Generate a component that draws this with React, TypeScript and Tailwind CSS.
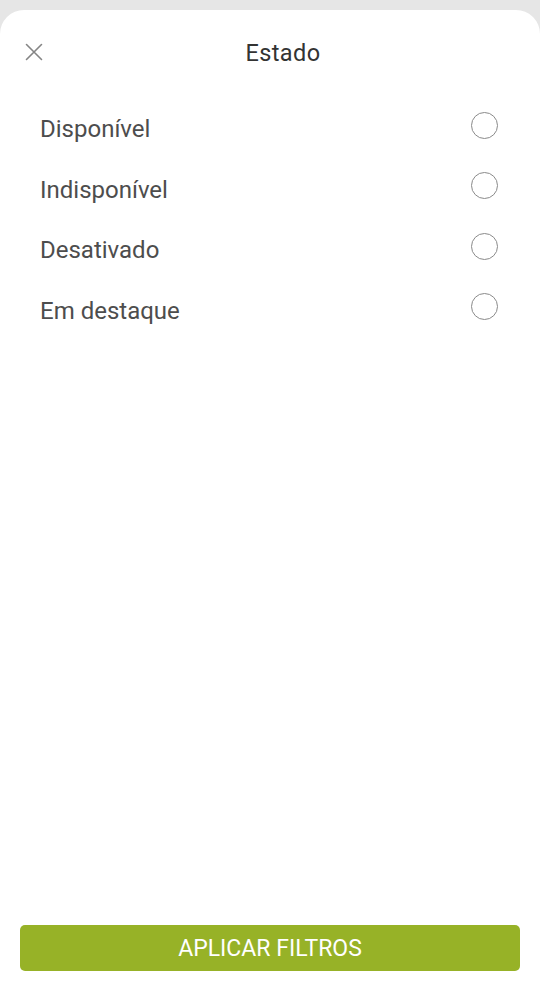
import React from "react";

const items = ["Disponível", "Indisponível", "Desativado", "Em destaque"];

export default function App() {
  return (
    <div
      className="w-[540px] h-[1002px] bg-[#e6e6e6] flex flex-col pt-[10px] overflow-hidden"
      style={{ fontFamily: "Roboto, 'Liberation Sans', sans-serif" }}
    >
      <div className="flex-1 bg-white rounded-t-[24px] flex flex-col">
        <div className="h-[84px] flex items-center pr-[26px]">
          <div className="w-[52px] flex justify-end pr-[9px]">
            <svg width="18" height="18" viewBox="0 0 18 18" fill="none">
              <path d="M1.5 1.5L16.5 16.5M16.5 1.5L1.5 16.5" stroke="#858585" strokeWidth="1.6" strokeLinecap="round" />
            </svg>
          </div>
          <div className="flex-1 text-center text-[23.5px] tracking-[0.4px] text-[#333333] leading-none mt-[4px]">Estado</div>
        </div>
        <div className="pt-[5px] flex flex-col">
          {items.map((t) => (
            <div key={t} className="h-[60.5px] flex items-center justify-between pl-[40px] pr-[42px]">
              <span className="text-[24px] text-[#4d4d4d] leading-none">{t}</span>
              <span className="w-[27px] h-[27px] mb-[8px] rounded-full border-[1.5px] border-[#8a8a8a]" />
            </div>
          ))}
        </div>
        <div className="flex-1" />
        <div className="px-[20px] pb-[31px]">
          <button className="w-full h-[46px] rounded-[5px] bg-[#97b227] text-white text-[23px] leading-none flex items-center justify-center pt-[1px]">
            APLICAR FILTROS
          </button>
        </div>
      </div>
    </div>
  );
}
